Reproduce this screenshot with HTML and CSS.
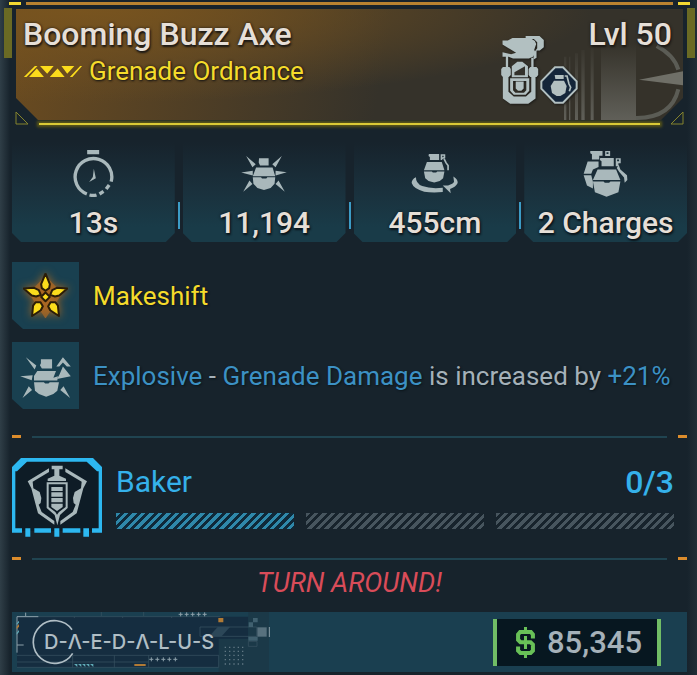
FILE: index.html
```
<!DOCTYPE html>
<html lang="en">
<head>
    <meta charset="utf-8">
    <title>Booming Buzz Axe</title>
    <link rel="stylesheet" href="styles.css">
</head>
<body>
    <div class="card">
        <header class="header">
            <div class="topline"></div>
            <div class="panel">
                <svg class="emblem" viewBox="0 0 357 240" width="119" height="80">
                    <defs>
                        <linearGradient id="fade" x1="0" y1="0" x2="0" y2="1">
                            <stop offset="0" stop-color="#8b8d87" stop-opacity="0"/>
                            <stop offset="1" stop-color="#8b8d87" stop-opacity=".5"/>
                        </linearGradient>
                    </defs>
                    <path fill="url(#fade)" d="M0 50h7v190H0zM15 50h4v190h-4zM33 40h9v200h-9zM52 30h10v210H52zM80 20h9v220h-9zM111 10h105v230H111z"/>
                    <path fill="#6f6f67" d="M225 119L357 94v42z"/>
                    <path fill="none" stroke="#5b5c55" stroke-width="12" d="M278 18Q330 45 343 89M343 148Q322 235 216 234"/>
                </svg>
                <div class="heading">
                    <h1>Booming Buzz Axe</h1>
                    <p class="type">
                        <svg viewBox="0 0 180 34" width="60" height="11" fill="#fbdc1c">
                            <path d="M0 34L34 0h8L8 34zM16 34L40 8l22 26zM50 0h42L72 24zM80 34L104 8l22 26zM116 0h40L134 24zM142 34L174 0h6L150 34z"/>
                        </svg>
                        Grenade Ordnance
                    </p>
                </div>
                <div class="badges">
                    <svg viewBox="0 0 132 206" width="44" height="68" fill="#b2c0c1">
                        <path d="M4 14h16l14-8h54l14 9 4 9-6 18 4 9-8 12-12 5H36l-14-5H4V49l26 6 15-4L4 26z"/>
                        <path d="M74 0h42l13 12v22l-12 10h-10v22l-9 5V52l11-15V19L99 9H74z"/>
                        <path d="M14 58h7v38h-7zM91 66h7v30h-7z"/>
                        <path d="M5 94h20l4 6v18l-6 6H5l-5-6v-18zM88 94h19l5 6v18l-5 6H88l-5-6v-18z"/>
                        <path d="M32 92l17-14h15l17 14v33H32z"/>
                        <path fill="#33312b" d="M72 92v27H40v-9z"/>
                        <path d="M5 124h17v45l16 14h37l16-14v-45h13v65l-22 16H27L5 189z"/>
                        <path fill-rule="evenodd" d="M27 128h58v38l-11 12H38l-11-12zM36 136v28l7 8h26l7-8v-28z"/>
                        <path d="M44 138h24v21l-7 7h-10l-7-7z"/>
                    </svg>
                    <svg viewBox="0 0 114 114" width="38" height="38">
                        <path fill="#14263a" stroke="#b2c0c1" stroke-width="6" d="M45 4h24l41 42v22l-41 42H45L4 68V46z"/>
                        <g fill="#b2c0c1">
                            <path d="M44 27h27v12H46z"/>
                            <path d="M42 44h30l8 16-4 21-15 9H50l-14-9-4-21z"/>
                            <path fill="none" stroke="#b2c0c1" stroke-width="5" d="M74 30h7l6 24 5 10-4 12"/>
                        </g>
                    </svg>
                </div>
                <div class="level">Lvl 50</div>
            </div>
            <div class="underline">
                <svg viewBox="0 0 14 14" width="14" height="14"><path d="M1 1v12h12z"/></svg>
                <i></i>
                <svg viewBox="0 0 14 14" width="14" height="14"><path d="M13 1v12H1z"/></svg>
            </div>
        </header>

        <section class="stats">
            <div class="stat">
                <svg viewBox="0 0 122 144" width="41" height="48">
                    <path fill="#a9b8bb" d="M42 3h36v13H42zM62 59l6 29-20 11 11-15z"/>
                    <g fill="none" stroke="#a9b8bb" stroke-width="10">
                        <path d="M41 135A55 55 0 1 1 114 98"/>
                        <path d="M49 138q12 3 21 0M79 135l12-8M99 120l9-12"/>
                    </g>
                </svg>
                <span>13s</span>
            </div>
            <div class="stat">
                <svg viewBox="0 0 138 112" width="46" height="37" fill="#a9b8bb">
                    <path d="M54 10h29v22H57l-4-9zM45 38h50l8 26H35zM35 67h25l3 4h13l3-4h24l-2 20-12 13-20 6-20-6-12-13z"/>
                    <path d="M15 3l29 25-10 9zM123 3L94 28l10 9zM0 53l35-5v14zM138 52l-34-4v14zM6 111l19-34 9 11zM132 111l-19-34-9 11z"/>
                </svg>
                <span>11,194</span>
            </div>
            <div class="stat">
                <svg viewBox="0 0 142 122" width="47" height="41" fill="#a9b8bb">
                    <path d="M54 2h31v18H57v-9l-4-3z"/>
                    <path fill="none" stroke="#a9b8bb" stroke-width="5" d="M92 20V5h9v8l-7 2M100 17l6 12 6 8v14"/>
                    <path d="M48 26h45l8 25H39zM39 55h24l3 3h10l3-3h22l-4 20-10 9-17 4-17-4-10-9z"/>
                    <path d="M15 72Q2 78 2 90q6 18 38 26 25 4 56 1v-13q-36 4-62-5-20-9-19-27z"/>
                    <path d="M128 70q14 8 13 20-5 12-23 18l2 13-24-24h16q16-5 18-11z"/>
                </svg>
                <span>455cm</span>
            </div>
            <div class="stat">
                <svg viewBox="0 0 136 142" width="45" height="47" fill="#a9b8bb">
                    <path d="M22 3h37v14H49v12H27V13l-5-3zM67 3h15v15H67zM14 35h33v16L30 59l-5 13H2zM2 76h23l5 20v20l-18-9z"/>
                    <path d="M52 24h41v25H56V34l-5-4zM99 25h15v15h-7v9h-8zM108 45l5 14 20 17 1 15-8 8-2-16-15-17-7-12z"/>
                    <path d="M44 59h56l13 32H30zM30 95h32l4 4h13l4-4h30l-6 33-16 6-20 7-19-7-16-6z"/>
                    <path fill="#19303b" d="M71 7h6v5h-6zM103 29h6v5h-6z"/>
                </svg>
                <span>2 Charges</span>
            </div>
        </section>

        <section class="perks">
            <div class="perk">
                <div class="perk-icon">
                    <svg class="star" viewBox="0 0 134 134" width="45" height="45">
                        <path fill="#b06a22" opacity=".7" d="M67 8l50 52-50 76-50-76z"/>
                        <g fill="#fbdc1c" stroke="#2b1d08" stroke-width="6" stroke-linejoin="round">
                            <path d="M67 2l13 31-2 12-11 8-11-8-2-12zM2 46l31-2 14 7 6 14-14 5-13-3zM132 46l-31-2-14 7-6 14 14 5 13-3zM27 128l3-31 8-10 14 0 7 12-6 12zM107 128l-3-31-8-10-14 0-7 12 6 12z"/>
                            <path d="M67 58l13 13-13 13-13-13z"/>
                        </g>
                    </svg>
                </div>
                <p class="yellow">Makeshift</p>
            </div>
            <div class="perk">
                <div class="perk-icon">
                    <svg viewBox="0 0 154 134" width="51" height="44" fill="#a9b8bb">
                        <path d="M63 16h34v28H66l-6-10 3-6zM52 52h57l-8 20 14-4-2 13H42v-14zM42 86h30l4 4h10l4-4h28l-5 26-12 10-22 8-22-8-12-10z"/>
                        <path d="M17 10l32 25-5 12zM0 68l38-3-3 15zM7 134l19-36 10 12zM152 134l-30-24 10-12zM130 10l24 28h-12l-12-12-11 12h-9zM130 38l24 30-42 8 8-14z"/>
                    </svg>
                </div>
                <p><span class="blue">Explosive</span> - <span class="blue">Grenade Damage</span> is increased by <span class="blue">+21%</span></p>
            </div>
        </section>

        <div class="divider"><i></i></div>

        <section class="license">
            <svg viewBox="0 0 270 237" width="90" height="79">
                <path fill="#0e1c26" d="M5 27L27 5h216l22 22v192H5z"/>
                <path fill="#2db8f1" d="M0 27L27 0h216l27 27v197h-30v-13h20V40h-5L224 11H45L15 40h-5v171h20v13H0zM67 211h50v13H67zM152 211h53v13h-53zM40 211h15v25H40zM127 211h15v25h-15zM214 211h17v25h-17z"/>
                <g fill="#a9b8bb">
                    <path d="M119 23h33v11h-10v19l20 9v7h-55v-7l20-9V34h-8z"/>
                    <path d="M111 31v11L62 71l2 20 19 11 5 18-2 15-6 5 9 22 38 27v11L78 166 58 91 47 70zM160 31v11l49 29-2 20-19 11-5 18 2 15 6 5-9 22-37 27v11l49-34 20-75 11-21z"/>
                    <path fill-rule="evenodd" d="M104 73h63v77l-23 21-8 31-8-31-24-21zM110 79v68l20 15 5 8 6-8 20-15V79z"/>
                    <path d="M118 87h34v12h-34zM118 103h34v13h-34zM118 120h34v13h-34zM118 137h34v10l-17 12-17-12z"/>
                </g>
            </svg>
            <div class="license-info">
                <div class="license-title">
                    <span>Baker</span>
                    <b>0/3</b>
                </div>
                <div class="bars">
                    <div class="bar active"></div>
                    <div class="bar"></div>
                    <div class="bar"></div>
                </div>
            </div>
        </section>

        <div class="divider"><i></i></div>

        <p class="flavor">TURN AROUND!</p>

        <footer class="footer">
            <div class="brand">
                <svg class="brand-art" viewBox="0 0 780 180" width="260" height="60">
                    <path fill="#152d40" d="M15 14h694v152H15z"/>
                    <path fill="#1b3948" d="M620 80h151v100H620zM709 0h62v80h-62z"/>
                    <g fill="none" stroke="#3b5563" stroke-width="2">
                        <path d="M15 14h610M15 130h605v36M15 150h395M15 166h605M182 130v36M307 130v36M410 130v36M564 45h170v28H564zM268 0v12M395 0v12M187 14v4M332 14v4M479 14v4M709 88h26v15h-26z"/>
                    </g>
                    <path fill="none" stroke="#8da1aa" stroke-width="3" d="M15 122V14h64M41 2v10M15 99h20M772 45v30"/>
                    <path fill="none" stroke="#8da1aa" stroke-width="3" d="M500 7h12m-6-6v12M518 7h12m-6-6v12M536 7h12m-6-6v12M554 7h12m-6-6v12M572 7h12m-6-6v12M412 142h12m-6-6v12M430 142h12m-6-6v12M448 142h12m-6-6v12M466 142h12m-6-6v12M484 142h12m-6-6v12"/>
                    <path fill="#b07a35" d="M619 18h15v13h-15zM367 156h34v6h-34zM14 44l7-8v8l-7 8z"/>
                    <path fill="#5fa9b5" d="M186 156h10v9zM198 156h10v9zM210 156h10v9zM222 156h10v9zM234 156h10v9zM14 62l7-8v6l-7 8zM14 34l7-8v6l-7 6z"/>
                    <path fill="#40606f" d="M710 31h13v14h-13zM723 18h14v13h-14zM709 74h28v12h-28z"/>
                    <path fill="#2c4758" d="M592 73l25-28h37l-25 28z"/>
                    <path fill="#58717e" d="M736 46h28v28h-28z"/>
                    <path fill="none" stroke="#607782" stroke-width="4" stroke-dasharray="4 9" d="M638 106h60M638 118h60M638 130h60M638 143h60M638 156h60"/>
                    <path fill="none" stroke="#b0bec5" stroke-width="5" d="M180 53A64 64 0 1 0 182 124"/>
                </svg>
                <span class="brand-name">D-Λ-E-D-Λ-L-U-S</span>
            </div>
            <div class="price">
                <svg viewBox="0 0 56 92" width="19" height="31">
                    <g fill="none" stroke="#68c057">
                        <path stroke-width="12" d="M50 34V22l-6-7H12l-6 7v16l7 7h30l7 7v18l-7 7H13l-7-7V58"/>
                        <path stroke-width="9" d="M28 0v14M28 76v16M28 27v38"/>
                    </g>
                </svg>
                <span>85,345</span>
            </div>
        </footer>
    </div>
</body>
</html>
```
FILE: styles.css
```
* { box-sizing: border-box; }
body {
    margin: 0;
    background: #17232c;
    font-family: Roboto, "Liberation Sans", sans-serif;
    color: #a5b1b9;
}
h1, p { margin: 0; font-weight: 400; }
svg { display: block; flex: none; }

.card {
    padding: 0 10px 3px 12px;
    background: linear-gradient(90deg, #2f3e47, #17232c 10px, #17232c calc(100% - 10px), #202d36);
}

/* header */
.header { position: relative; padding: 2px 4px 0; }
.header::before, .header::after {
    content: "";
    position: absolute;
    top: 8px;
    width: 8px;
    height: 50px;
    background: #6a6a24;
}
.header::before { left: -8px; }
.header::after { right: -8px; }
.topline {
    height: 3px;
    margin: 0 -7px 4px;
    background: linear-gradient(90deg, #f3d932 12px, transparent 12px 17px, #b88230 17px calc(100% - 17px), transparent calc(100% - 17px) calc(100% - 12px), #f3d932 calc(100% - 12px));
}
.panel {
    position: relative;
    display: flex;
    align-items: flex-start;
    height: 111px;
    padding: 6px 11px 0 7px;
    background: radial-gradient(ellipse at 10% 0, #78541f 0, rgba(120,84,31,0) 60%), linear-gradient(100deg, #6a4b20, #35322a 55%);
    clip-path: polygon(0 0, 100% 0, 100% 89px, calc(100% - 22px) 100%, 22px 100%, 0 89px);
}
.emblem { position: absolute; right: 0; bottom: 0; }
.heading { flex: 1; }
h1, .level {
    font-size: 32px;
    line-height: 38px;
    font-weight: 500;
    color: #e6dfd7;
    text-shadow: 0 0 3px #1d1a16, 1px 2px 2px #1d1a16;
}
.level { position: relative; margin-left: 10px; }
.type {
    display: flex;
    align-items: center;
    gap: 6px;
    font-size: 26px;
    line-height: 36px;
    color: #f5db2b;
    text-shadow: 0 0 3px #1d1a16, 1px 1px 2px #1d1a16;
}
.badges { position: relative; display: flex; align-items: flex-end; padding-top: 21px; filter: drop-shadow(1px 1px 1px #1c1b18); }
.badges svg + svg { margin-left: -5px; }
.underline { display: flex; align-items: flex-end; gap: 10px; height: 14px; margin: -9px -1px 0; }
.underline svg { fill: none; stroke: #85842d; }
.underline i { flex: 1; height: 2px; background: #d9c936; box-shadow: 0 0 3px 2px #5b5719; }

/* stats */
.stats { position: relative; z-index: 0; display: grid; grid-template-columns: repeat(4, 1fr); gap: 8px; margin-top: 17px; }
.stat { position: relative; display: flex; flex-direction: column; align-items: center; height: 100px; }
.stat::before {
    content: "";
    position: absolute;
    z-index: -1;
    inset: 0;
    background: linear-gradient(#17232c, #1a313d 50%, #193b48 85%);
    clip-path: polygon(0 0, 100% 0, 100% 91px, calc(100% - 9px) 100%, 9px 100%, 0 91px);
}
.stat + .stat::after { content: ""; position: absolute; left: -5px; top: 60px; width: 2px; height: 27px; background: #3b9cc6; }
.stat svg { margin: auto; }
.stat span {
    font-size: 30px;
    line-height: 38px;
    font-weight: 500;
    color: #e6dfd7;
    white-space: nowrap;
    text-shadow: 0 0 3px #0b151b, 1px 2px 2px #0b151b;
}

/* perks */
.perks { display: grid; gap: 13px; margin-top: 20px; }
.perk { display: flex; align-items: center; gap: 14px; }
.perk-icon {
    flex: none;
    display: flex;
    align-items: center;
    justify-content: center;
    width: 67px;
    height: 67px;
    background: #194050;
    clip-path: polygon(0 0, 100% 0, 100% 100%, 11px 100%, 0 57px);
}
.star { filter: drop-shadow(0 0 4px #a5651f); }
.perk p { font-size: 26px; line-height: 34px; text-shadow: 1px 1px 2px #0b151b; white-space: nowrap; }
.perk .yellow { color: #f5db2b; }
.blue { color: #3c91c4; }

.divider { display: flex; align-items: center; height: 3px; }
.divider::before, .divider::after { content: ""; width: 9px; height: 3px; background: #dc8c2c; }
.divider i { flex: 1; height: 2px; margin: 0 11px; background: #204451; }
.perks + .divider { margin-top: 26px; }

/* license */
.license { display: flex; gap: 14px; margin: 20px 13px 20px 0; }
.license-info { flex: 1; padding-top: 4px; }
.license-title { display: flex; justify-content: space-between; font-size: 30px; line-height: 40px; color: #35b1ea; }
.license-title b { font-size: 32px; font-weight: 500; }
.bars { display: grid; grid-template-columns: repeat(3, 1fr); gap: 12px; margin-top: 11px; }
.bar { height: 16px; background: repeating-linear-gradient(135deg, #47555e 0 3px, #17232c 3px 6px); }
.bar.active { background: repeating-linear-gradient(135deg, #2f88aa 0 3px, #0f2939 3px 6px); }

.flavor { margin-top: 6px; font-size: 27px; line-height: 34px; font-style: italic; text-align: center; color: #d94c59; }

/* footer */
.footer { display: flex; justify-content: space-between; align-items: center; height: 60px; margin-top: 12px; padding-right: 26px; background: #1a3f50; }
.brand { position: relative; }
.brand-name {
    position: absolute;
    left: 32px;
    top: 18px;
    font-family: Inter, "Liberation Sans", sans-serif;
    font-size: 20px;
    line-height: 24px;
    font-weight: 500;
    color: #b0bec5;
    white-space: nowrap;
}
.price {
    display: flex;
    align-items: center;
    gap: 12px;
    height: 47px;
    padding: 0 15px 0 19px;
    border: solid #71bd66;
    border-width: 0 4px;
    background: #071720;
    font-size: 31px;
    font-weight: 500;
}
```
